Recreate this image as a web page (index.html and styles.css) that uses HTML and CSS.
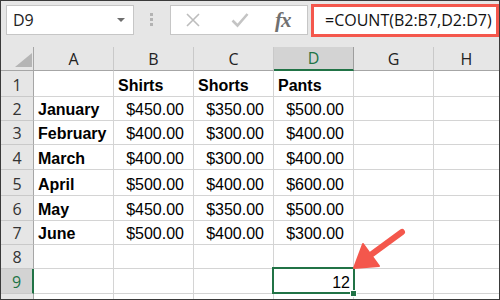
FILE: index.html
```html
<!DOCTYPE html>
<html lang="en">
<head>
  <meta charset="UTF-8">
  <title>COUNT example</title>
  <link rel="stylesheet" href="styles.css">
</head>
<body>

  <div class="screen">

    <div class="toolbar">
      <div class="namebox">
        <span>D9</span>
        <span class="caret"></span>
      </div>
      <div class="grip"><i></i><i></i><i></i></div>
      <div class="buttons">
        <svg class="icon" width="16" height="16" viewBox="0 0 16 16">
          <path d="M2 2 L14 14 M14 2 L2 14" stroke="#bdbdbd" stroke-width="1.6" fill="none"/>
        </svg>
        <svg class="icon" width="18" height="16" viewBox="0 0 18 16">
          <path d="M1.5 8.5 L6.5 13.5 L16.5 2" stroke="#c4c4c4" stroke-width="2.6" fill="none"/>
        </svg>
        <span class="fx">fx</span>
      </div>
      <div class="formula">=COUNT(B2:B7,D2:D7)</div>
    </div>

    <div class="sheet">
      <div class="hd corner"><span class="tri"></span></div>
      <div class="hd">A</div>
      <div class="hd">B</div>
      <div class="hd">C</div>
      <div class="hd on">D</div>
      <div class="hd">G</div>
      <div class="hd last">H</div>

      <div class="rh">1</div>
      <div class="c"></div>
      <div class="c b">Shirts</div>
      <div class="c b">Shorts</div>
      <div class="c b">Pants</div>
      <div class="c"></div>
      <div class="c last"></div>

      <div class="rh">2</div>
      <div class="c b">January</div>
      <div class="c n">$450.00</div>
      <div class="c n">$350.00</div>
      <div class="c n">$500.00</div>
      <div class="c"></div>
      <div class="c last"></div>

      <div class="rh">3</div>
      <div class="c b">February</div>
      <div class="c n">$400.00</div>
      <div class="c n">$300.00</div>
      <div class="c n">$400.00</div>
      <div class="c"></div>
      <div class="c last"></div>

      <div class="rh">4</div>
      <div class="c b">March</div>
      <div class="c n">$400.00</div>
      <div class="c n">$300.00</div>
      <div class="c n">$400.00</div>
      <div class="c"></div>
      <div class="c last"></div>

      <div class="rh">5</div>
      <div class="c b">April</div>
      <div class="c n">$500.00</div>
      <div class="c n">$400.00</div>
      <div class="c n">$600.00</div>
      <div class="c"></div>
      <div class="c last"></div>

      <div class="rh">6</div>
      <div class="c b">May</div>
      <div class="c n">$450.00</div>
      <div class="c n">$350.00</div>
      <div class="c n">$500.00</div>
      <div class="c"></div>
      <div class="c last"></div>

      <div class="rh">7</div>
      <div class="c b">June</div>
      <div class="c n">$500.00</div>
      <div class="c n">$400.00</div>
      <div class="c n">$300.00</div>
      <div class="c"></div>
      <div class="c last"></div>

      <div class="rh">8</div>
      <div class="c"></div>
      <div class="c"></div>
      <div class="c"></div>
      <div class="c"></div>
      <div class="c"></div>
      <div class="c last"></div>

      <div class="rh on">9</div>
      <div class="c"></div>
      <div class="c"></div>
      <div class="c"></div>
      <div class="c active">12</div>
      <div class="c"></div>
      <div class="c last"></div>

      <div class="rh end"></div>
      <div class="c end"></div>
      <div class="c end"></div>
      <div class="c end"></div>
      <div class="c end"></div>
      <div class="c end"></div>
      <div class="c end last"></div>
    </div>

    <!-- arrow pointing at D9 -->
    <svg class="arrow" width="500" height="300" viewBox="0 0 500 300">
      <line x1="402" y1="232" x2="372" y2="254" stroke="#f4574c" stroke-width="6" stroke-linecap="round"/>
      <polygon points="354,268 363,244 379,266" fill="#f4574c" stroke="#f4574c" stroke-width="2" stroke-linejoin="round"/>
    </svg>

  </div>

</body>
</html>
```

FILE: styles.css
```css
body {
  margin: 0;
  background: #fff;
}

.screen {
  position: relative;
  width: 500px;
  height: 300px;
  box-sizing: border-box;
  border: 1px solid #3a3a3a;
  background: #e6e6e6;
  overflow: hidden;
  display: flex;
  flex-direction: column;
  font-family: "Open Sans", "Noto Sans", sans-serif;
}

/* formula bar */
.toolbar {
  height: 46px;
  display: flex;
  align-items: flex-start;
  padding: 3px 0 0 5px;
  box-sizing: border-box;
}

.namebox {
  width: 128px;
  height: 30px;
  margin-top: 1px;
  box-sizing: border-box;
  background: #fff;
  border: 1px solid #c6c6c6;
  display: flex;
  align-items: center;
  justify-content: space-between;
  padding: 0 8px 0 6px;
  font-size: 16px;
  color: #222;
}

.caret {
  width: 0;
  height: 0;
  border-left: 4px solid transparent;
  border-right: 4px solid transparent;
  border-top: 4px solid #6e6e6e;
}

.grip {
  margin: 9px 0 0 16px;
  display: flex;
  flex-direction: column;
  gap: 2px;
}

.grip i {
  width: 3px;
  height: 3px;
  background: #b3b3b3;
}

.buttons {
  width: 138px;
  height: 30px;
  margin: 1px 0 0 17px;
  box-sizing: border-box;
  background: #fff;
  border: 1px solid #c6c6c6;
  display: flex;
  align-items: center;
  padding-left: 14px;
  gap: 30px;
}

.fx {
  font-family: "Liberation Serif", serif;
  font-style: italic;
  font-weight: bold;
  font-size: 21px;
  color: #707070;
  margin-left: -4px;
  letter-spacing: -1px;
}

.formula {
  flex: 1;
  height: 33px;
  margin-left: 3px;
  box-sizing: border-box;
  background: #fff;
  border: 3px solid #f4574c;
  padding-left: 11px;
  font-size: 16px;
  line-height: 26px;
  color: #111;
}

/* grid */
.sheet {
  flex: 1;
  display: grid;
  grid-template-columns: 33px repeat(5, 80px) 1fr;
  grid-template-rows: 24px 26px 24px 24px 25px 26px 25px 24px 24px 25px 1fr;
  background: #fff;
}

.hd {
  background: #e6e6e6;
  border-right: 1px solid #c9c9c9;
  border-bottom: 1px solid #a6a6a6;
  box-sizing: border-box;
  display: flex;
  align-items: center;
  justify-content: center;
  font-size: 16px;
  color: #222;
}

.hd.on {
  background: #d3d3d3;
  color: #217346;
  border-bottom: 2px solid #217346;
  border-right-color: #9e9e9e;
}

.corner {
  position: relative;
  border-right-color: #a6a6a6;
}

.tri {
  position: absolute;
  right: 1px;
  bottom: 3px;
  width: 17px;
  height: 14px;
  background: #b5b5b5;
  clip-path: polygon(100% 0, 100% 100%, 0 100%);
}

.rh {
  background: #e6e6e6;
  border-right: 1px solid #a6a6a6;
  border-bottom: 1px solid #c9c9c9;
  box-sizing: border-box;
  display: flex;
  align-items: flex-end;
  justify-content: center;
  font-size: 16px;
  line-height: 22px;
  color: #333;
}

.rh.on {
  background: #d3d3d3;
  color: #217346;
  border-right: 2px solid #217346;
}

.c {
  border-right: 1px solid #d4d4d4;
  border-bottom: 1px solid #d4d4d4;
  box-sizing: border-box;
  display: flex;
  align-items: flex-end;
  padding: 0 4px 1px;
  font-family: "Liberation Sans", Arial, sans-serif;
  font-size: 16px;
  line-height: 18px;
  color: #000;
  white-space: nowrap;
}

.c.b {
  font-weight: bold;
}

.c.n {
  justify-content: flex-end;
  padding-right: 9px;
}

.last {
  border-right: none;
}

.end {
  border-bottom: none;
}

/* selected cell */
.c.active {
  position: relative;
  justify-content: flex-end;
  padding-right: 3px;
}

.c.active::before {
  content: "";
  position: absolute;
  left: -2px;
  top: -2px;
  right: -2px;
  bottom: -1px;
  border: 2px solid #217346;
}

.c.active::after {
  content: "";
  position: absolute;
  right: -4px;
  bottom: -4px;
  width: 5px;
  height: 5px;
  background: #217346;
  border: 1px solid #fff;
}

.arrow {
  position: absolute;
  left: -1px;
  top: -1px;
  pointer-events: none;
}
```
